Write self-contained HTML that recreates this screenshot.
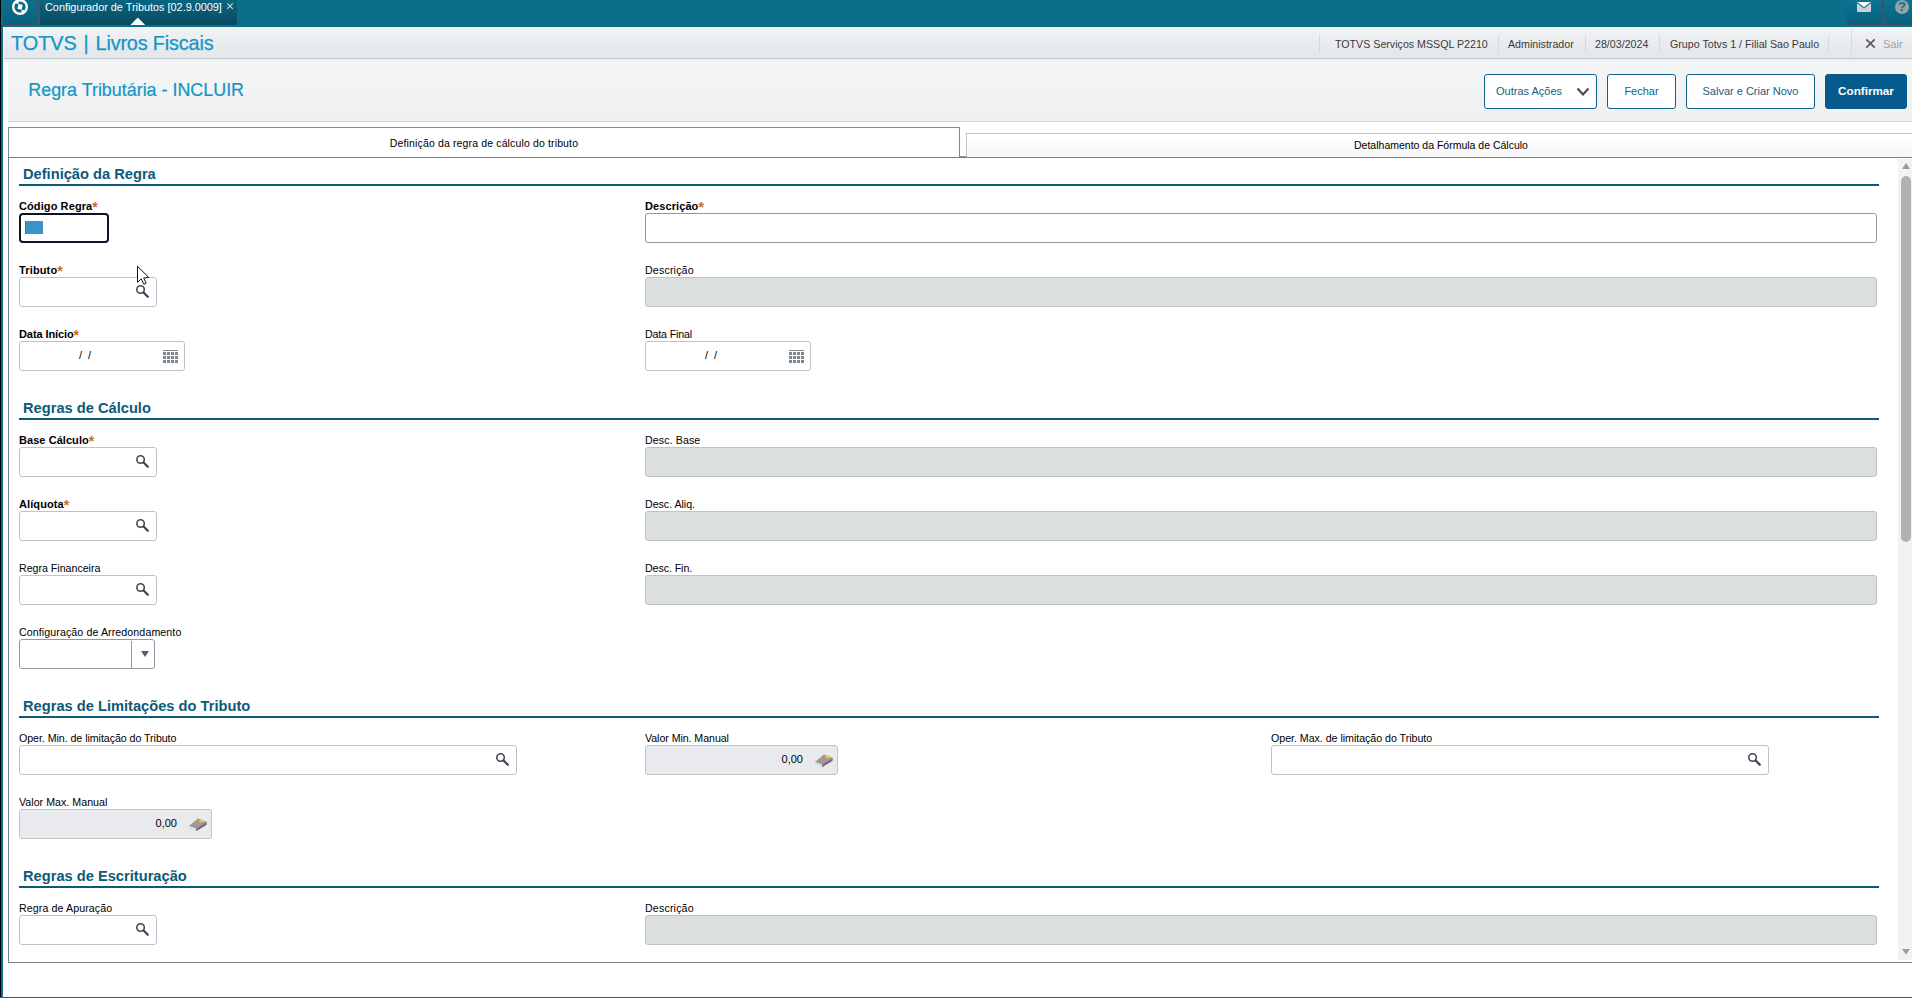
<!DOCTYPE html>
<html lang="pt-BR">
<head>
<meta charset="utf-8">
<title>Configurador de Tributos</title>
<style>
*{box-sizing:border-box;margin:0;padding:0}
html,body{width:1912px;height:998px;overflow:hidden;background:#fff}
body{position:relative;font-family:"Liberation Sans",Arial,sans-serif;font-size:11px;color:#000}
.abs{position:absolute}
#edgeL{left:0;top:0;width:1px;height:998px;background:#000}
#edgeL2{left:1px;top:0;width:2px;height:998px;background:#0c6f8b}
#bottomLine{left:0;top:997px;width:1912px;height:1px;background:#0c6f8b}
#topbar{left:0;top:0;width:1912px;height:27px;background:#0b6f8c}
#logoBtn{left:2px;top:0;width:37px;height:25px;background:linear-gradient(#0b6f8b,#096380);border-right:1px solid #3a4f60;border-bottom:1px solid #3a4f60}
#apptab{left:40px;top:0;width:197px;height:25px;background:linear-gradient(#0a6580,#084b61);color:#fff;font-size:10.87px}
#apptab span.t{position:absolute;left:5px;top:0;line-height:14px;white-space:nowrap}
#apptab span.x{position:absolute;left:185px;top:-1px;font-size:11px;line-height:14px;color:#dfe9ee}
.tbtn{top:0;height:25px;background:linear-gradient(#0b7390,#086280);border-right:1px solid #3a4f60;border-bottom:1px solid #3a4f60}
#tri{left:130px;top:17px;width:16px;height:8px}
#hdr{left:4px;top:27px;width:1908px;height:32px;background:linear-gradient(#f1f3f5,#e3e6ea);border-bottom:1px solid #c2c8cc}
#hdr2{left:4px;top:59px;width:1908px;height:3px;background:#eff1f1}
#stripW{left:3px;top:27px;width:1px;height:35px;background:#fff}
#hdr .brand{position:absolute;left:7px;top:4px;font-size:19.85px;line-height:24px;color:#1196c7;-webkit-text-stroke:.25px #1196c7;white-space:nowrap}
.hinfo{position:absolute;top:27px;height:32px;line-height:35px;font-size:10.67px;color:#3a3a3a;white-space:nowrap}
.hsep{position:absolute;top:35px;width:1px;height:17px;background:#d5d8dc}
#titlebar{left:8px;top:62px;width:1904px;height:60px;background:linear-gradient(#f4f6f6,#eff0f2);border-bottom:1px solid #d3d5d8}
#stripL{left:3px;top:62px;width:5px;height:935px;background:#fff}
#title{left:28.3px;top:78px;font-size:17.9px;line-height:24px;color:#1196c7;-webkit-text-stroke:.2px #1196c7;white-space:nowrap}
.btn{position:absolute;top:74px;height:35px;border:1px solid #0f6088;border-radius:3px;background:#fff;color:#14607f;font-size:11px;line-height:33px;text-align:center;white-space:nowrap}
.btn.pri{background:#075a8c;border-color:#075a8c;color:#fff;font-weight:bold;font-size:11.7px;line-height:31px}
#panel{left:8px;top:157px;width:1906px;height:806px;border:1px solid #7b7f8a;background:#fff}
#tabA{left:8px;top:127px;width:952px;height:31px;border:1px solid #85878b;border-bottom:none;background:#fff;text-align:center;line-height:30px;font-size:10.5px;letter-spacing:.14px}
#tabB{left:966px;top:133px;width:950px;height:24px;border:1px solid #c3c5c9;border-bottom:none;background:linear-gradient(#fff,#f6f6f6);text-align:center;line-height:23px;font-size:10.5px}
.sec{position:absolute;left:23px;font-size:14.67px;font-weight:bold;color:#0c5a78;line-height:18px;white-space:nowrap}
.secl{position:absolute;left:19px;width:1860px;height:2px;background:#0c5a78}
.lbl{position:absolute;font-size:10.67px;line-height:14px;white-space:nowrap;color:#000}
.lbl.b{font-weight:bold;font-size:11px}
.lbl i{letter-spacing:0;font-style:normal;color:#c46a28;font-size:14px;line-height:0;position:relative;top:2px;font-weight:bold}
.inp{position:absolute;height:29px;border:1px solid #bfc3c7;border-radius:3px;background:#fff}
.inp.dis{background:#dcdfe0;border-color:#bfc3c7}
.inp.num{background:#e8eaee}
.inp .v{position:absolute;top:0;line-height:27px;font-size:11px;white-space:pre}
.inp.date .v{word-spacing:3px}
#sbar{left:1898px;top:159px;width:14px;height:801px;background:#f2f2f2}
#sthumb{left:1901px;top:176px;width:10px;height:366px;border-radius:5px;background:#b1b3b2}

.ic{position:absolute;display:block}
.inp.req,.inp.combo{border-color:#8e9aa0}
.inp.foc{border:2px solid #0a1428;height:30px;border-radius:4px}
.inp{height:30px}
.sel{position:absolute;left:4px;top:6px;width:18px;height:13px;background:#3b93c6;border-left:1px solid #a0524a}
.cdiv{position:absolute;left:111px;top:1px;width:1px;height:27px;background:#8e9aa0}
</style>
</head>
<body>
<div id="topbar" class="abs"></div>
<div id="logoBtn" class="abs"></div><svg class="abs" style="left:11px;top:-2px" width="18" height="18" viewBox="0 0 18 18"><defs><clipPath id="lc"><circle cx="9" cy="9" r="5.8"/></clipPath></defs><circle cx="9" cy="9" r="6.8" fill="none" stroke="#fff" stroke-width="2.4"/><g clip-path="url(#lc)" fill="#fff" transform="rotate(10 9 9)"><rect x="6.9" y="6.4" width="4.3" height="4.9"/><rect x="0" y="0" width="6.9" height="6.4"/><rect x="11.2" y="11.3" width="7" height="7"/></g></svg>
<div class="abs tbtn" style="left:1846px;width:37px"></div><div class="abs tbtn" style="left:1884px;width:28px;border-right:none"></div>
<svg class="abs" style="left:1857px;top:2px" width="14" height="10" viewBox="0 0 14 10"><rect x="0" y="0" width="14" height="10" rx="1" fill="#ccd4d7"/><path d="M0 0.3H14L7 5.6Z" fill="#fff"/><path d="M0.3 0.8L7 5.9L13.7 0.8" fill="none" stroke="#0b6c88" stroke-width="1.1"/></svg>
<svg class="abs" style="left:1895px;top:0" width="14" height="14" viewBox="0 0 14 14"><circle cx="7" cy="7" r="7" fill="#98a2ab"/><text x="7" y="11.3" text-anchor="middle" font-family="Liberation Sans, sans-serif" font-weight="bold" font-size="13" fill="#0b6c88">?</text></svg>
<div id="apptab" class="abs"><span class="t">Configurador de Tributos [02.9.0009]</span><svg class="abs" style="left:186px;top:2px" width="8" height="8" viewBox="0 0 8 8"><title>✕</title><path d="M1.2 1.3L6.8 6.9M6.8 1.3L1.2 6.9" stroke="#c9dae1" stroke-width="1.1" fill="none"/></svg></div>
<svg id="tri" class="abs" viewBox="0 0 16 8"><path d="M0.4 8L7.8 0.4L15.2 8Z" fill="#fff"/></svg>
<div id="hdr" class="abs"><div class="brand"><span style="word-spacing:1.3px">TOTVS | </span><span style="letter-spacing:-.17px">Livros Fiscais</span></div></div>
<div id="hdr2" class="abs"></div><div id="stripW" class="abs"></div><div id="stripL" class="abs"></div>
<div id="titlebar" class="abs"></div>
<div id="title" class="abs">Regra Tributária - INCLUIR</div>

<div class="hsep abs" style="left:1319px"></div>
<div class="hinfo" style="left:1335px">TOTVS Serviços MSSQL P2210</div>
<div class="hsep abs" style="left:1498px"></div>
<div class="hinfo" style="left:1508px">Administrador</div>
<div class="hsep abs" style="left:1585px"></div>
<div class="hinfo" style="left:1595px">28/03/2024</div>
<div class="hsep abs" style="left:1659px"></div>
<div class="hinfo" style="left:1670px">Grupo Totvs 1 / Filial Sao Paulo</div>
<div class="hsep abs" style="left:1828px"></div>
<div class="hsep abs" style="left:1851px;top:30px;height:28px;background:#d9dcdf"></div>
<svg class="abs" style="left:1865px;top:38px" width="11" height="11" viewBox="0 0 11 11"><path d="M1.3 1.3L9.7 9.7M9.7 1.3L1.3 9.7" stroke="#5a5670" stroke-width="1.7" fill="none"/></svg>
<div class="hinfo" style="left:1883px;color:#9aa0a8;font-size:11px">Sair</div>
<div class="btn" style="left:1484px;width:113px;text-align:left;padding-left:11px">Outras Ações<svg class="ic" style="left:91px;top:12px" width="14" height="10" viewBox="0 0 14 10"><path d="M1.5 1.5L7 7.5L12.5 1.5" fill="none" stroke="#4a4458" stroke-width="2"/></svg></div>
<div class="btn" style="left:1607px;width:69px">Fechar</div>
<div class="btn" style="left:1686px;width:129px">Salvar e Criar Novo</div>
<div class="btn pri" style="left:1825px;width:82px">Confirmar</div>
<div id="tabA" class="abs">Definição da regra de cálculo do tributo</div>
<div id="tabB" class="abs">Detalhamento da Fórmula de Cálculo</div>
<div id="panel" class="abs"></div><div class="abs" style="left:960px;top:156px;width:6px;height:1px;background:#8a9094"></div>
<div class="sec" style="top:165px">Definição da Regra</div><div class="secl" style="top:184px"></div>
<div class="lbl b" style="left:19px;top:199px;letter-spacing:0.098px">Código Regra<i>*</i></div>
<div class="inp foc" style="left:19px;top:213px;width:90px"><div class="sel"></div></div>
<div class="lbl b" style="left:645px;top:199px;letter-spacing:0.090px">Descrição<i>*</i></div>
<div class="inp req" style="left:645px;top:213px;width:1232px"></div>
<div class="lbl b" style="left:19px;top:263px;letter-spacing:0.146px">Tributo<i>*</i></div>
<div class="inp look" style="left:19px;top:277px;width:138px"><svg class="ic" style="left:114px;top:6px" width="16" height="16" viewBox="0 0 16 16"><circle cx="6.55" cy="5.5" r="3.75" fill="none" stroke="#40455a" stroke-width="1.6"/><path d="M9.6 8.5L13.8 12.7" stroke="#40455a" stroke-width="2.3" stroke-linecap="round"/></svg></div>
<div class="lbl" style="left:645px;top:263px;letter-spacing:0.157px">Descrição</div>
<div class="inp dis" style="left:645px;top:277px;width:1232px"></div>
<div class="lbl b" style="left:19px;top:327px;letter-spacing:-0.093px">Data Início<i>*</i></div>
<div class="inp date" style="left:19px;top:341px;width:166px"><span class="v" style="left:59px">/ /</span><svg class="ic" style="left:143px;top:8px" width="16" height="14" viewBox="0 0 16 14"><g fill="#7d8892"><rect x="0" y="0" width="15" height="1"/><rect x="0" y="2" width="3" height="3"/><rect x="4" y="2" width="3" height="3"/><rect x="8" y="2" width="3" height="3"/><rect x="12" y="2" width="3" height="3"/><rect x="0" y="6" width="3" height="3"/><rect x="4" y="6" width="3" height="3"/><rect x="8" y="6" width="3" height="3"/><rect x="12" y="6" width="3" height="3"/><rect x="0" y="10" width="3" height="3"/><rect x="4" y="10" width="3" height="3"/><rect x="8" y="10" width="3" height="3"/><rect x="12" y="10" width="3" height="3"/></g></svg></div>
<div class="lbl" style="left:645px;top:327px;letter-spacing:-0.168px">Data Final</div>
<div class="inp date" style="left:645px;top:341px;width:166px"><span class="v" style="left:59px">/ /</span><svg class="ic" style="left:143px;top:8px" width="16" height="14" viewBox="0 0 16 14"><g fill="#7d8892"><rect x="0" y="0" width="15" height="1"/><rect x="0" y="2" width="3" height="3"/><rect x="4" y="2" width="3" height="3"/><rect x="8" y="2" width="3" height="3"/><rect x="12" y="2" width="3" height="3"/><rect x="0" y="6" width="3" height="3"/><rect x="4" y="6" width="3" height="3"/><rect x="8" y="6" width="3" height="3"/><rect x="12" y="6" width="3" height="3"/><rect x="0" y="10" width="3" height="3"/><rect x="4" y="10" width="3" height="3"/><rect x="8" y="10" width="3" height="3"/><rect x="12" y="10" width="3" height="3"/></g></svg></div>
<div class="sec" style="top:399px">Regras de Cálculo</div><div class="secl" style="top:418px"></div>
<div class="lbl b" style="left:19px;top:433px;letter-spacing:0.059px">Base Cálculo<i>*</i></div>
<div class="inp look" style="left:19px;top:447px;width:138px"><svg class="ic" style="left:114px;top:6px" width="16" height="16" viewBox="0 0 16 16"><circle cx="6.55" cy="5.5" r="3.75" fill="none" stroke="#40455a" stroke-width="1.6"/><path d="M9.6 8.5L13.8 12.7" stroke="#40455a" stroke-width="2.3" stroke-linecap="round"/></svg></div>
<div class="lbl" style="left:645px;top:433px;letter-spacing:0.090px">Desc. Base</div>
<div class="inp dis" style="left:645px;top:447px;width:1232px"></div>
<div class="lbl b" style="left:19px;top:497px;letter-spacing:0.088px">Alíquota<i>*</i></div>
<div class="inp look" style="left:19px;top:511px;width:138px"><svg class="ic" style="left:114px;top:6px" width="16" height="16" viewBox="0 0 16 16"><circle cx="6.55" cy="5.5" r="3.75" fill="none" stroke="#40455a" stroke-width="1.6"/><path d="M9.6 8.5L13.8 12.7" stroke="#40455a" stroke-width="2.3" stroke-linecap="round"/></svg></div>
<div class="lbl" style="left:645px;top:497px;letter-spacing:-0.031px">Desc. Aliq.</div>
<div class="inp dis" style="left:645px;top:511px;width:1232px"></div>
<div class="lbl" style="left:19px;top:561px;letter-spacing:-0.022px">Regra Financeira</div>
<div class="inp look" style="left:19px;top:575px;width:138px"><svg class="ic" style="left:114px;top:6px" width="16" height="16" viewBox="0 0 16 16"><circle cx="6.55" cy="5.5" r="3.75" fill="none" stroke="#40455a" stroke-width="1.6"/><path d="M9.6 8.5L13.8 12.7" stroke="#40455a" stroke-width="2.3" stroke-linecap="round"/></svg></div>
<div class="lbl" style="left:645px;top:561px;letter-spacing:-0.087px">Desc. Fin.</div>
<div class="inp dis" style="left:645px;top:575px;width:1232px"></div>
<div class="lbl" style="left:19px;top:625px;letter-spacing:0.082px">Configuração de Arredondamento</div>
<div class="inp combo" style="left:19px;top:639px;width:136px"><div class="cdiv"></div><svg class="ic" style="left:121px;top:11px" width="9" height="7" viewBox="0 0 9 7"><path d="M0 0H8L4 6Z" fill="#5d5a72"/></svg></div>
<div class="sec" style="top:697px">Regras de Limitações do Tributo</div><div class="secl" style="top:716px"></div>
<div class="lbl" style="left:19px;top:731px;letter-spacing:-0.057px">Oper. Min. de limitação do Tributo</div>
<div class="inp look" style="left:19px;top:745px;width:498px"><svg class="ic" style="left:474px;top:6px" width="16" height="16" viewBox="0 0 16 16"><circle cx="6.55" cy="5.5" r="3.75" fill="none" stroke="#40455a" stroke-width="1.6"/><path d="M9.6 8.5L13.8 12.7" stroke="#40455a" stroke-width="2.3" stroke-linecap="round"/></svg></div>
<div class="lbl" style="left:645px;top:731px;letter-spacing:-0.070px">Valor Min. Manual</div>
<div class="inp num" style="left:645px;top:745px;width:193px"><span class="v" style="right:34px">0,00</span><svg class="ic" style="left:168px;top:8px" width="20" height="14" viewBox="0 0 20 14"><path d="M0.8 8L10 0.4L19 4L8.1 10.4Z" fill="#9c948d"/><path d="M0.8 8L8.1 10.4L8.1 13.3L1 10.8Z" fill="#dbe0e3"/><path d="M8.1 10.4L19 4L18.4 6.9L8.1 13.3Z" fill="#6f6a82"/><path d="M10.4 2.7L13.2 1.3L16.8 3L13.8 5Z" fill="#f1c152"/><path d="M3.4 7.6L9.6 2.6M5.4 8.3L11.4 3.6M7.4 9L13.4 4.6" stroke="#b3aba3" stroke-width=".6" fill="none"/><g fill="#b25a52"><circle cx="10.6" cy="10.4" r=".55"/><circle cx="13.2" cy="8.9" r=".55"/><circle cx="15.8" cy="7.3" r=".55"/></g></svg></div>
<div class="lbl" style="left:1271px;top:731px;letter-spacing:-0.035px">Oper. Max. de limitação do Tributo</div>
<div class="inp look" style="left:1271px;top:745px;width:498px"><svg class="ic" style="left:474px;top:6px" width="16" height="16" viewBox="0 0 16 16"><circle cx="6.55" cy="5.5" r="3.75" fill="none" stroke="#40455a" stroke-width="1.6"/><path d="M9.6 8.5L13.8 12.7" stroke="#40455a" stroke-width="2.3" stroke-linecap="round"/></svg></div>
<div class="lbl" style="left:19px;top:795px;letter-spacing:0.020px">Valor Max. Manual</div>
<div class="inp num" style="left:19px;top:809px;width:193px"><span class="v" style="right:34px">0,00</span><svg class="ic" style="left:168px;top:8px" width="20" height="14" viewBox="0 0 20 14"><path d="M0.8 8L10 0.4L19 4L8.1 10.4Z" fill="#9c948d"/><path d="M0.8 8L8.1 10.4L8.1 13.3L1 10.8Z" fill="#dbe0e3"/><path d="M8.1 10.4L19 4L18.4 6.9L8.1 13.3Z" fill="#6f6a82"/><path d="M10.4 2.7L13.2 1.3L16.8 3L13.8 5Z" fill="#f1c152"/><path d="M3.4 7.6L9.6 2.6M5.4 8.3L11.4 3.6M7.4 9L13.4 4.6" stroke="#b3aba3" stroke-width=".6" fill="none"/><g fill="#b25a52"><circle cx="10.6" cy="10.4" r=".55"/><circle cx="13.2" cy="8.9" r=".55"/><circle cx="15.8" cy="7.3" r=".55"/></g></svg></div>
<div class="sec" style="top:867px">Regras de Escrituração</div><div class="secl" style="top:886px"></div>
<div class="lbl" style="left:19px;top:901px;letter-spacing:0.087px">Regra de Apuração</div>
<div class="inp look" style="left:19px;top:915px;width:138px"><svg class="ic" style="left:114px;top:6px" width="16" height="16" viewBox="0 0 16 16"><circle cx="6.55" cy="5.5" r="3.75" fill="none" stroke="#40455a" stroke-width="1.6"/><path d="M9.6 8.5L13.8 12.7" stroke="#40455a" stroke-width="2.3" stroke-linecap="round"/></svg></div>
<div class="lbl" style="left:645px;top:901px;letter-spacing:0.157px">Descrição</div>
<div class="inp dis" style="left:645px;top:915px;width:1232px"></div>
<div id="sbar" class="abs"></div>
<div id="sthumb" class="abs"></div>
<svg class="abs" style="left:1901px;top:162px" width="10" height="8" viewBox="0 0 10 8"><path d="M1 7L5 1L9 7Z" fill="#9b9b9b"/></svg>
<svg class="abs" style="left:1901px;top:948px" width="10" height="8" viewBox="0 0 10 8"><path d="M1 1L5 6.6L9 1Z" fill="#9b9b9b"/></svg>
<svg class="abs" style="left:136px;top:265px" width="14" height="21" viewBox="0 0 14 21"><path d="M1.5 1.2L1.5 17.3L5.2 13.9L7.9 19.3L10.2 18.2L7.7 13L12.6 12.4Z" fill="#fff" stroke="#0a1430" stroke-width="1" stroke-linejoin="round"/></svg>
<div id="edgeL" class="abs"></div>
<div id="edgeL2" class="abs"></div>
<div id="bottomLine" class="abs"></div>
</body>
</html>
